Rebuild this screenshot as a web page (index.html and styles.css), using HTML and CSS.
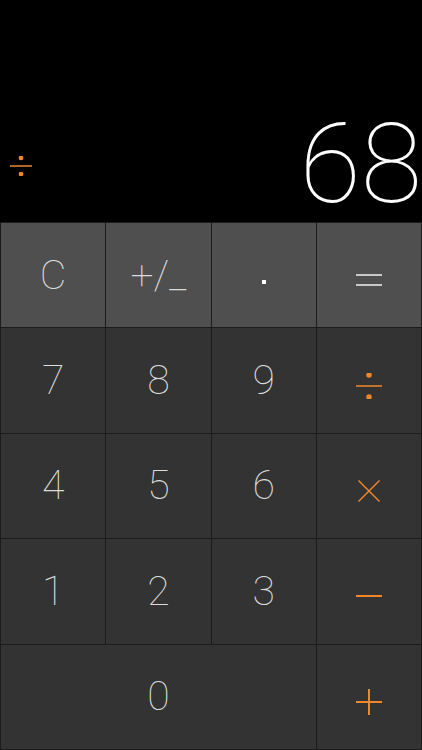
FILE: index.html
```html
<!DOCTYPE html>
<html lang="en">
<head>
    <meta charset="UTF-8">
    <meta name="viewport" content="width=device-width, initial-scale=1.0">
    <title>Calculator</title>
    <link rel="stylesheet" href="styles.css">
</head>
<body>
    <div class="calculator">
        <div class="display">
            <svg class="pending-op" width="22" height="20" viewBox="0 0 22 20" aria-label="divide">
                <circle cx="11" cy="2" r="1.6"/>
                <line x1="0" y1="10" x2="22" y2="10"/>
                <circle cx="11" cy="18" r="1.6"/>
            </svg>
            <div class="screen">68</div>
        </div>

        <div class="keypad">
            <button class="key fn">C</button>
            <button class="key fn sign"><span class="sign-plus">+</span><span>/</span><span class="sign-minus">_</span></button>
            <button class="key fn" aria-label="decimal point">
                <svg class="glyph" width="26" height="26" viewBox="0 0 26 26"><rect x="11" y="13" width="4" height="4" fill="#fff"/></svg>
            </button>
            <button class="key fn" aria-label="equals">
                <svg class="glyph light" width="26" height="26" viewBox="0 0 26 26">
                    <line x1="0" y1="8" x2="26" y2="8"/>
                    <line x1="0" y1="18" x2="26" y2="18"/>
                </svg>
            </button>

            <button class="key">7</button>
            <button class="key">8</button>
            <button class="key">9</button>
            <button class="key" aria-label="divide">
                <svg class="glyph op" width="26" height="26" viewBox="0 0 26 26">
                    <circle cx="13" cy="2" r="2"/>
                    <line x1="0" y1="13" x2="26" y2="13"/>
                    <circle cx="13" cy="24" r="2"/>
                </svg>
            </button>

            <button class="key">4</button>
            <button class="key">5</button>
            <button class="key">6</button>
            <button class="key" aria-label="multiply">
                <svg class="glyph op" width="26" height="26" viewBox="0 0 26 26">
                    <line x1="2.5" y1="2.5" x2="23.5" y2="23.5"/>
                    <line x1="23.5" y1="2.5" x2="2.5" y2="23.5"/>
                </svg>
            </button>

            <button class="key">1</button>
            <button class="key">2</button>
            <button class="key">3</button>
            <button class="key" aria-label="subtract">
                <svg class="glyph op bold" width="26" height="26" viewBox="0 0 26 26">
                    <line x1="0" y1="13" x2="26" y2="13"/>
                </svg>
            </button>

            <button class="key zero">0</button>
            <button class="key" aria-label="add">
                <svg class="glyph op bold" width="26" height="26" viewBox="0 0 26 26">
                    <line x1="0" y1="13" x2="26" y2="13"/>
                    <line x1="13" y1="0" x2="13" y2="26"/>
                </svg>
            </button>
        </div>
    </div>
</body>
</html>
```

FILE: styles.css
```css
html, body {
    margin: 0;
    padding: 0;
    background-color: #000;
}
.calculator {
    width: 422px;
    height: 750px;
    display: flex;
    flex-direction: column;
    font-family: Roboto, "Liberation Sans", sans-serif;
}
.display {
    height: 222px;
    display: flex;
    align-items: flex-end;
    justify-content: space-between;
    padding: 0 0 0 10px;
    box-sizing: border-box;
}
.pending-op {
    margin-bottom: 46px;
    fill: #f0882a;
    stroke: #f0882a;
    stroke-width: 1.5;
}
.screen {
    color: #fff;
    font-size: 112px;
    font-weight: 100;
    line-height: 1;
    margin-bottom: 2px;
}
.keypad {
    flex: 1;
    display: grid;
    grid-template-columns: repeat(4, 1fr);
    grid-template-rows: repeat(5, 1fr);
    gap: 1px;
    padding: 1px;
    background-color: #1c1c1c;
}
.key {
    display: flex;
    align-items: center;
    justify-content: center;
    border: none;
    padding: 0;
    margin: 0;
    background-color: #333;
    color: #dcdcdc;
    font-family: Roboto, "Liberation Sans", sans-serif;
    font-size: 41px;
    font-weight: 100;
    line-height: 1;
}
.key.fn {
    background-color: #4f4f4f;
}
.zero {
    grid-column: span 3;
}
.sign span {
    display: inline-block;
}
.sign-plus {
    vertical-align: 9px;
}
.sign-minus {
    vertical-align: 2px;
}
.glyph {
    margin-top: 10px;
    stroke-width: 1.5;
}
.glyph.op {
    fill: #f0882a;
    stroke: #f0882a;
}
.glyph.light {
    stroke: #c8c8c8;
    stroke-width: 2;
}
.glyph.bold {
    stroke-width: 2;
}
```
